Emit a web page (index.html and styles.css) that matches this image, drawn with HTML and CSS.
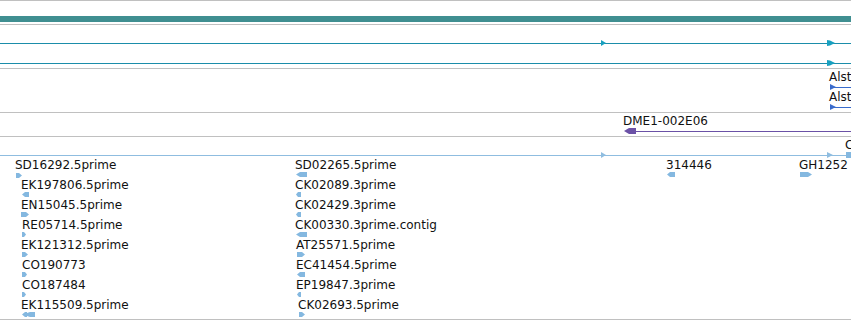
FILE: index.html
```html
<!DOCTYPE html>
<html>
<head>
<meta charset="utf-8">
<link rel="stylesheet" href="styles.css">
</head>
<body>
<div class="view">
  <div class="track track-gene">
    <div class="bar"></div>
  </div>

  <div class="track track-tx">
    <div class="hline teal" style="top:18px"></div>
    <svg class="flag f-teal-s" style="left:601px;top:15px" viewBox="0 0 5 6"><polygon points="0,0 5,3 0,6"/></svg>
    <svg class="flag f-teal" style="left:827px;top:15px" viewBox="0 0 8 6"><polygon points="0,0 3,0.5 8,3 3,5.5 0,6"/></svg>
    <div class="hline teal" style="top:38px"></div>
    <svg class="flag f-teal" style="left:827px;top:35px" viewBox="0 0 8 6"><polygon points="0,0 3,0.5 8,3 3,5.5 0,6"/></svg>
  </div>

  <div class="track track-alst">
    <span class="lbl" style="left:829px;top:1px">Alst</span>
    <div class="hline blue" style="top:18px;left:830px"></div>
    <svg class="flag f-blue" style="left:830px;top:15px" viewBox="0 0 6 6"><polygon points="0,0 6,3 0,6"/></svg>
    <span class="lbl" style="left:829px;top:21px">Alst</span>
    <div class="hline blue" style="top:38px;left:830px"></div>
    <svg class="flag f-blue" style="left:830px;top:35px" viewBox="0 0 6 6"><polygon points="0,0 6,3 0,6"/></svg>
  </div>

  <div class="track track-clone">
    <span class="lbl" style="left:623px;top:1px">DME1-002E06</span>
    <div class="hline purple" style="top:18px;left:630px"></div>
    <svg class="flag f-purple" style="left:624px;top:15px" viewBox="0 0 12 6"><polygon points="0,3 5,0 12,0 12,6 5,6"/></svg>
  </div>

  <div class="track track-est">
    <div class="hline lblue" style="top:18px"></div>
    <svg class="flag f-lblue-s" style="left:601px;top:15px" viewBox="0 0 5 6"><polygon points="0,0 5,3 0,6"/></svg>
    <svg class="flag f-lblue" style="left:827px;top:15px" viewBox="0 0 6 6"><polygon points="0,0 6,3 0,6"/></svg>
    <span class="lbl" style="left:845px;top:1px">C</span>
    <div class="sq" style="left:846px;top:15px"></div>

    <span class="lbl" style="left:15px;top:21px">SD16292.5prime</span>
    <svg class="mk" style="left:16px;top:36px;width:6px" viewBox="0 0 6 5"><polygon points="0,0 3,0 6,2.5 3,5 0,5"/></svg>
    <span class="lbl" style="left:21px;top:41px">EK197806.5prime</span>
    <svg class="mk" style="left:22px;top:55px;width:7px" viewBox="0 0 7 5"><polygon points="0,2.5 3,0 7,0 7,5 3,5"/></svg>
    <span class="lbl" style="left:21px;top:61px">EN15045.5prime</span>
    <svg class="mk" style="left:21px;top:75px;width:8px" viewBox="0 0 8 5"><polygon points="0,0 5,0 8,2.5 5,5 0,5"/></svg>
    <span class="lbl" style="left:22px;top:81px">RE05714.5prime</span>
    <svg class="mk" style="left:22px;top:95px;width:4px" viewBox="0 0 4 5"><polygon points="0,0 2,0 4,2.5 2,5 0,5"/></svg>
    <span class="lbl" style="left:21px;top:101px">EK121312.5prime</span>
    <svg class="mk" style="left:22px;top:115px;width:6px" viewBox="0 0 6 5"><polygon points="0,0 3,0 6,2.5 3,5 0,5"/></svg>
    <span class="lbl" style="left:22px;top:121px">CO190773</span>
    <svg class="mk" style="left:22px;top:135px;width:5px" viewBox="0 0 5 5"><polygon points="0,0 3,0 5,2.5 3,5 0,5"/></svg>
    <span class="lbl" style="left:22px;top:141px">CO187484</span>
    <svg class="mk" style="left:22px;top:155px;width:4px" viewBox="0 0 4 5"><polygon points="0,0 2,0 4,2.5 2,5 0,5"/></svg>
    <span class="lbl" style="left:21px;top:161px">EK115509.5prime</span>
    <svg class="mk" style="left:22px;top:175px;width:13px" viewBox="0 0 13 5"><polygon points="0,2.5 3,0 5,0 5,1 8,0 13,0 13,5 8,5 5,4 5,5 3,5"/></svg>

    <span class="lbl" style="left:295px;top:21px">SD02265.5prime</span>
    <svg class="mk" style="left:296px;top:35px;width:11px" viewBox="0 0 11 5"><polygon points="0,2.5 4,0 11,0 11,5 4,5"/></svg>
    <span class="lbl" style="left:295px;top:41px">CK02089.3prime</span>
    <svg class="mk" style="left:296px;top:55px;width:5px" viewBox="0 0 5 5"><polygon points="0,2.5 2,0 5,0 5,5 2,5"/></svg>
    <span class="lbl" style="left:295px;top:61px">CK02429.3prime</span>
    <svg class="mk" style="left:296px;top:75px;width:5px" viewBox="0 0 5 5"><polygon points="0,2.5 2,0 5,0 5,5 2,5"/></svg>
    <span class="lbl" style="left:295px;top:81px">CK00330.3prime.contig</span>
    <svg class="mk" style="left:296px;top:95px;width:11px" viewBox="0 0 11 5"><polygon points="0,2.5 4,0 11,0 11,5 4,5"/></svg>
    <span class="lbl" style="left:296px;top:101px">AT25571.5prime</span>
    <svg class="mk" style="left:297px;top:115px;width:8px" viewBox="0 0 8 5"><polygon points="0,0 5,0 8,2.5 5,5 0,5"/></svg>
    <span class="lbl" style="left:296px;top:121px">EC41454.5prime</span>
    <svg class="mk" style="left:297px;top:135px;width:8px" viewBox="0 0 8 5"><polygon points="0,2.5 3,0 8,0 8,5 3,5"/></svg>
    <span class="lbl" style="left:296px;top:141px">EP19847.3prime</span>
    <svg class="mk" style="left:297px;top:155px;width:4px" viewBox="0 0 4 5"><polygon points="0,2.5 2,0 4,0 4,5 2,5"/></svg>
    <span class="lbl" style="left:298px;top:161px">CK02693.5prime</span>
    <svg class="mk" style="left:299px;top:175px;width:6px" viewBox="0 0 6 5"><polygon points="0,0 3,0 6,2.5 3,5 0,5"/></svg>

    <span class="lbl" style="left:666px;top:21px">314446</span>
    <svg class="mk" style="left:667px;top:35px;width:8px" viewBox="0 0 8 5"><polygon points="0,2.5 3,0 8,0 8,5 3,5"/></svg>
    <span class="lbl" style="left:799px;top:21px">GH1252</span>
    <svg class="mk" style="left:800px;top:35px;width:12px" viewBox="0 0 12 5"><polygon points="0,0 8,0 12,2.5 8,5 0,5"/></svg>
  </div>
</div>
</body>
</html>
```

FILE: styles.css
```css
html, body {
  margin: 0;
  padding: 0;
  background: #ffffff;
}

.view {
  width: 851px;
  height: 320px;
  overflow: hidden;
  border-top: 1px solid #c0c0c0;
  box-sizing: border-box;
  display: flex;
  flex-direction: column;
  font-family: "DejaVu Sans", "Liberation Sans", sans-serif;
  font-size: 12px;
  color: #111111;
}

.track {
  position: relative;
  flex: none;
  border-bottom: 1px solid #c0c0c0;
}

.track-gene { height: 23px; }
.track-tx { height: 43px; }
.track-alst { height: 43px; }
.track-clone { height: 23px; }
.track-est { height: 182px; }

.bar {
  position: absolute;
  left: 0;
  right: 0;
  top: 15px;
  height: 6px;
  background: #408f91;
}

.hline {
  position: absolute;
  left: 0;
  right: 0;
  height: 1px;
}

.teal { background: #1b8daa; }
.blue { background: #3a6ccc; }
.purple { background: #6b51a6; }
.lblue { background: #8fbde0; }

.flag {
  position: absolute;
  height: 6px;
}
.f-teal-s { width: 5px; fill: #18a0c0; }
.f-teal { width: 8px; fill: #18a0c0; }
.f-blue { width: 6px; fill: #3a6ccc; }
.f-purple { width: 12px; fill: #6b51a6; }
.f-lblue { width: 6px; fill: #8fbde0; }
.f-lblue-s { width: 5px; fill: #8fbde0; }

.sq {
  position: absolute;
  width: 6px;
  height: 6px;
  background: #84b8e0;
}

.mk {
  position: absolute;
  height: 5px;
  fill: #84b8e0;
}

.lbl {
  position: absolute;
  line-height: 14px;
  white-space: nowrap;
}
```
